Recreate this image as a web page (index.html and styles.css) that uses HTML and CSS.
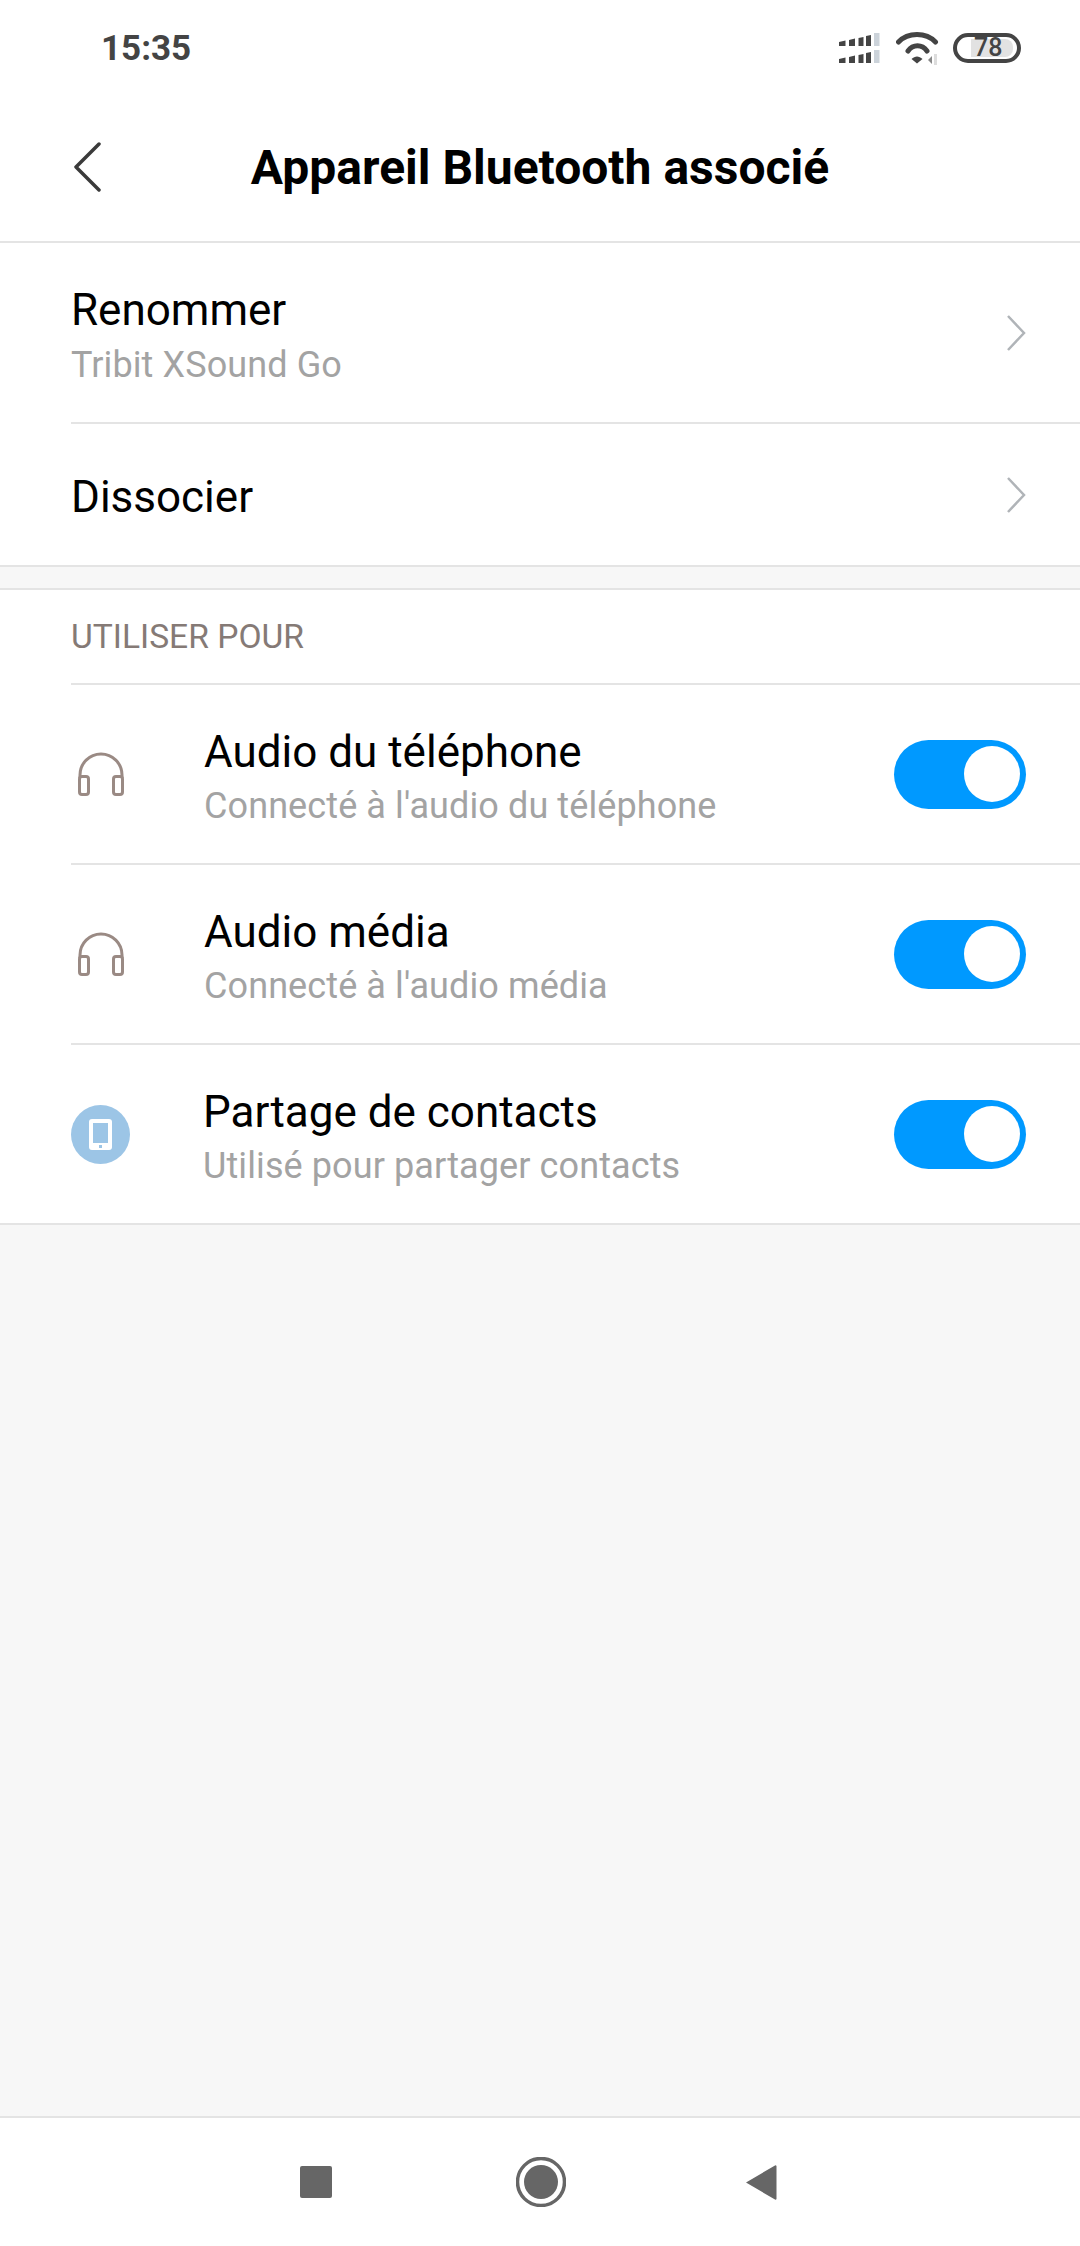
FILE: index.html
```html
<!DOCTYPE html>
<html lang="fr">
<head>
	<meta charset="UTF-8">
	<title>Appareil Bluetooth associé</title>
	<link rel="stylesheet" href="styles.css">
</head>
<body>
	<div class="screen">
		<!-- status bar -->
		<div class="status">
			<span class="time">15:35</span>
			<div class="status-icons">
				<svg class="signal" width="41" height="30" viewBox="0 0 41 30">
					<g fill="#444">
						<path d="M0 9l6.500-1.500v5.500H0zM10 7l6-1.500v7.500h-6zM19.500 5l5-1v9h-5zM27 3l5-1v11h-5z"/>
						<path d="M0 26l6.500-1.500V30H0zM10 24l6-1.500V30h-6zM19.500 22l5-1v9h-5zM27 20l5-1v11h-5z"/>
					</g>
					<path d="M35 0h5.500v13H35zM35 17h5.500v13H35z" fill="#ccd3da"/>
				</svg>
				<svg class="wifi" width="44" height="34" viewBox="0 0 44 34">
					<g fill="none" stroke="#444" stroke-width="5" stroke-linecap="round">
						<path d="M2.500 10C12 0 30 0 39.500 10"/>
						<path d="M12 19C17 12 26 12 31 19"/>
					</g>
					<path d="M15.500 27C19 23.500 23 23.500 26.500 27L21 31.500z" fill="#444"/>
					<path d="M36 24l-4 4 4 4z" fill="#888"/>
					<path d="M38 22h3v11h-3z" fill="#ddd"/>
				</svg>
				<div class="battery"><span class="battery-level">78</span></div>
			</div>
		</div>

		<!-- header -->
		<div class="header">
			<svg class="back" width="28" height="50" viewBox="0 0 28 50">
				<path d="M26 2L3 25l23 23" fill="none" stroke="#3a3a3a" stroke-width="3.500" stroke-linecap="round" stroke-linejoin="round"/>
			</svg>
			<h1 class="title">Appareil Bluetooth associé</h1>
		</div>

		<div class="section">
			<div class="row row-rename">
				<div class="row-text">
					<div class="row-title">Renommer</div>
					<div class="row-sub">Tribit XSound Go</div>
				</div>
				<svg class="chevron" width="20" height="36" viewBox="0 0 20 36">
					<path d="M2 1l16 17L2 35" fill="none" stroke="#b0b4b8" stroke-width="2.500"/>
				</svg>
			</div>
			<div class="row row-dissociate">
				<div class="row-text">
					<div class="row-title">Dissocier</div>
				</div>
				<svg class="chevron" width="20" height="36" viewBox="0 0 20 36">
					<path d="M2 1l16 17L2 35" fill="none" stroke="#b0b4b8" stroke-width="2.500"/>
				</svg>
			</div>
		</div>

		<div class="section section-use">
			<div class="section-label">UTILISER POUR</div>
			<div class="row row-profile">
				<div class="row-icon">
					<svg width="46" height="44" viewBox="0 0 46 44">
						<path d="M2 26V23a21 21 0 0 1 42 0v3" fill="none" stroke="#9a8a84" stroke-width="3"/>
						<rect x="1.500" y="24.500" width="9" height="18" rx="2.500" fill="none" stroke="#9a8a84" stroke-width="3"/>
						<rect x="35.500" y="24.500" width="9" height="18" rx="2.500" fill="none" stroke="#9a8a84" stroke-width="3"/>
					</svg>
				</div>
				<div class="row-text">
					<div class="row-title">Audio du téléphone</div>
					<div class="row-sub">Connecté à l'audio du téléphone</div>
				</div>
				<div class="switch"><span class="knob"></span></div>
			</div>
			<div class="row row-profile">
				<div class="row-icon">
					<svg width="46" height="44" viewBox="0 0 46 44">
						<path d="M2 26V23a21 21 0 0 1 42 0v3" fill="none" stroke="#9a8a84" stroke-width="3"/>
						<rect x="1.500" y="24.500" width="9" height="18" rx="2.500" fill="none" stroke="#9a8a84" stroke-width="3"/>
						<rect x="35.500" y="24.500" width="9" height="18" rx="2.500" fill="none" stroke="#9a8a84" stroke-width="3"/>
					</svg>
				</div>
				<div class="row-text">
					<div class="row-title">Audio média</div>
					<div class="row-sub">Connecté à l'audio média</div>
				</div>
				<div class="switch"><span class="knob"></span></div>
			</div>
			<div class="row row-profile row-contacts">
				<div class="row-icon">
					<svg width="59" height="59" viewBox="0 0 59 59">
						<circle cx="29.500" cy="29.500" r="29.500" fill="#9cc5e6"/>
						<rect x="18" y="14" width="23" height="31" rx="3" fill="#fff"/>
						<rect x="22" y="18" width="15" height="20" fill="#9cc5e6"/>
						<rect x="28" y="40" width="3" height="3" fill="#9cc5e6"/>
					</svg>
				</div>
				<div class="row-text">
					<div class="row-title">Partage de contacts</div>
					<div class="row-sub">Utilisé pour partager contacts</div>
				</div>
				<div class="switch"><span class="knob"></span></div>
			</div>
		</div>

		<div class="filler"></div>

		<!-- navigation bar -->
		<div class="navbar">
			<span class="nav-square"></span>
			<svg class="nav-home" width="50" height="50" viewBox="0 0 50 50">
				<circle cx="25" cy="25" r="23.500" fill="none" stroke="#666" stroke-width="3.500"/>
				<circle cx="25" cy="25" r="17" fill="#666"/>
			</svg>
			<svg class="nav-back" width="32" height="37" viewBox="0 0 32 37">
				<path d="M1 18.500L30 1.500a1 1 0 0 1 1.500 1v32a1 1 0 0 1-1.500 1z" fill="#666"/>
			</svg>
		</div>
	</div>
</body>
</html>
```

FILE: styles.css
```css
* { box-sizing: border-box; }
html, body { margin: 0; padding: 0; }
body { font-family: Roboto, "Liberation Sans", sans-serif; background: #f7f7f7; }

.screen { width: 1080px; height: 2246px; display: flex; flex-direction: column; }

.status { height: 96px; background: #fff; display: flex; align-items: center; justify-content: space-between; padding: 0 59px 0 101px; }
.time { font-size: 35px; font-weight: 700; color: #444; }
.status-icons { display: flex; align-items: center; }
.wifi { margin-left: 16px; margin-top: 2px; }
.battery { width: 68px; height: 30px; margin-left: 13px; border: 4px solid #444; border-radius: 15px; padding: 2px 4px 2px 14px; display: flex; }
.battery-level { flex: 1; padding-left: 3px; background: #e2e2e2; border-radius: 0 8px 8px 0; color: #444; font-size: 25px; font-weight: 500; line-height: 18px; }

.header { height: 147px; padding-bottom: 2px; background: #fff; border-bottom: 2px solid #e4e4e4; display: flex; align-items: center; justify-content: center; position: relative; }
.back { position: absolute; left: 73px; top: 46px; }
.title { margin: 0; font-size: 48px; font-weight: 700; color: #000; }

.section { background: #fff; border-bottom: 2px solid #e4e4e4; }
.section-use { margin-top: 21px; border-top: 2px solid #e4e4e4; }
.section-label { height: 93px; margin-left: 71px; padding-top: 27px; font-size: 33.600px; color: #857a76; }

.row { display: flex; align-items: center; margin-left: 71px; border-top: 2px solid #e4e4e4; }
.section .row:first-child { border-top: 0; }
.row-rename { height: 179px; }
.row-rename .row-sub { margin-top: 7px; }
.row-dissociate { height: 143px; }
.row-profile { height: 180px; }
.row-text { flex: 1; padding-top: 5px; }
.row-title { font-size: 44px; line-height: 52px; color: #000; }
.row-sub { font-size: 36px; letter-spacing: 0.100px; line-height: 44px; margin-top: 6px; color: #a3a3a3; }
.row-icon { width: 133px; flex: none; display: flex; }
.row-profile svg { margin-left: 7px; }
.row-contacts .row-icon { width: 132px; }
.row-contacts svg { margin-left: 0; }
.chevron { margin-right: 54px; }

.switch { width: 132px; height: 69px; margin-right: 54px; padding: 6.500px; border-radius: 35px; background: #0099ff; display: flex; justify-content: flex-end; }
.knob { width: 56px; height: 56px; border-radius: 50%; background: #fff; }

.filler { flex: 1; }

.navbar { height: 130px; background: #fff; border-top: 2px solid #e4e4e4; display: flex; align-items: center; padding-left: 300px; }
.nav-square { width: 32px; height: 32px; border-radius: 2px; background: #666; }
.nav-home { margin-left: 184px; }
.nav-back { margin-left: 179px; }
```
